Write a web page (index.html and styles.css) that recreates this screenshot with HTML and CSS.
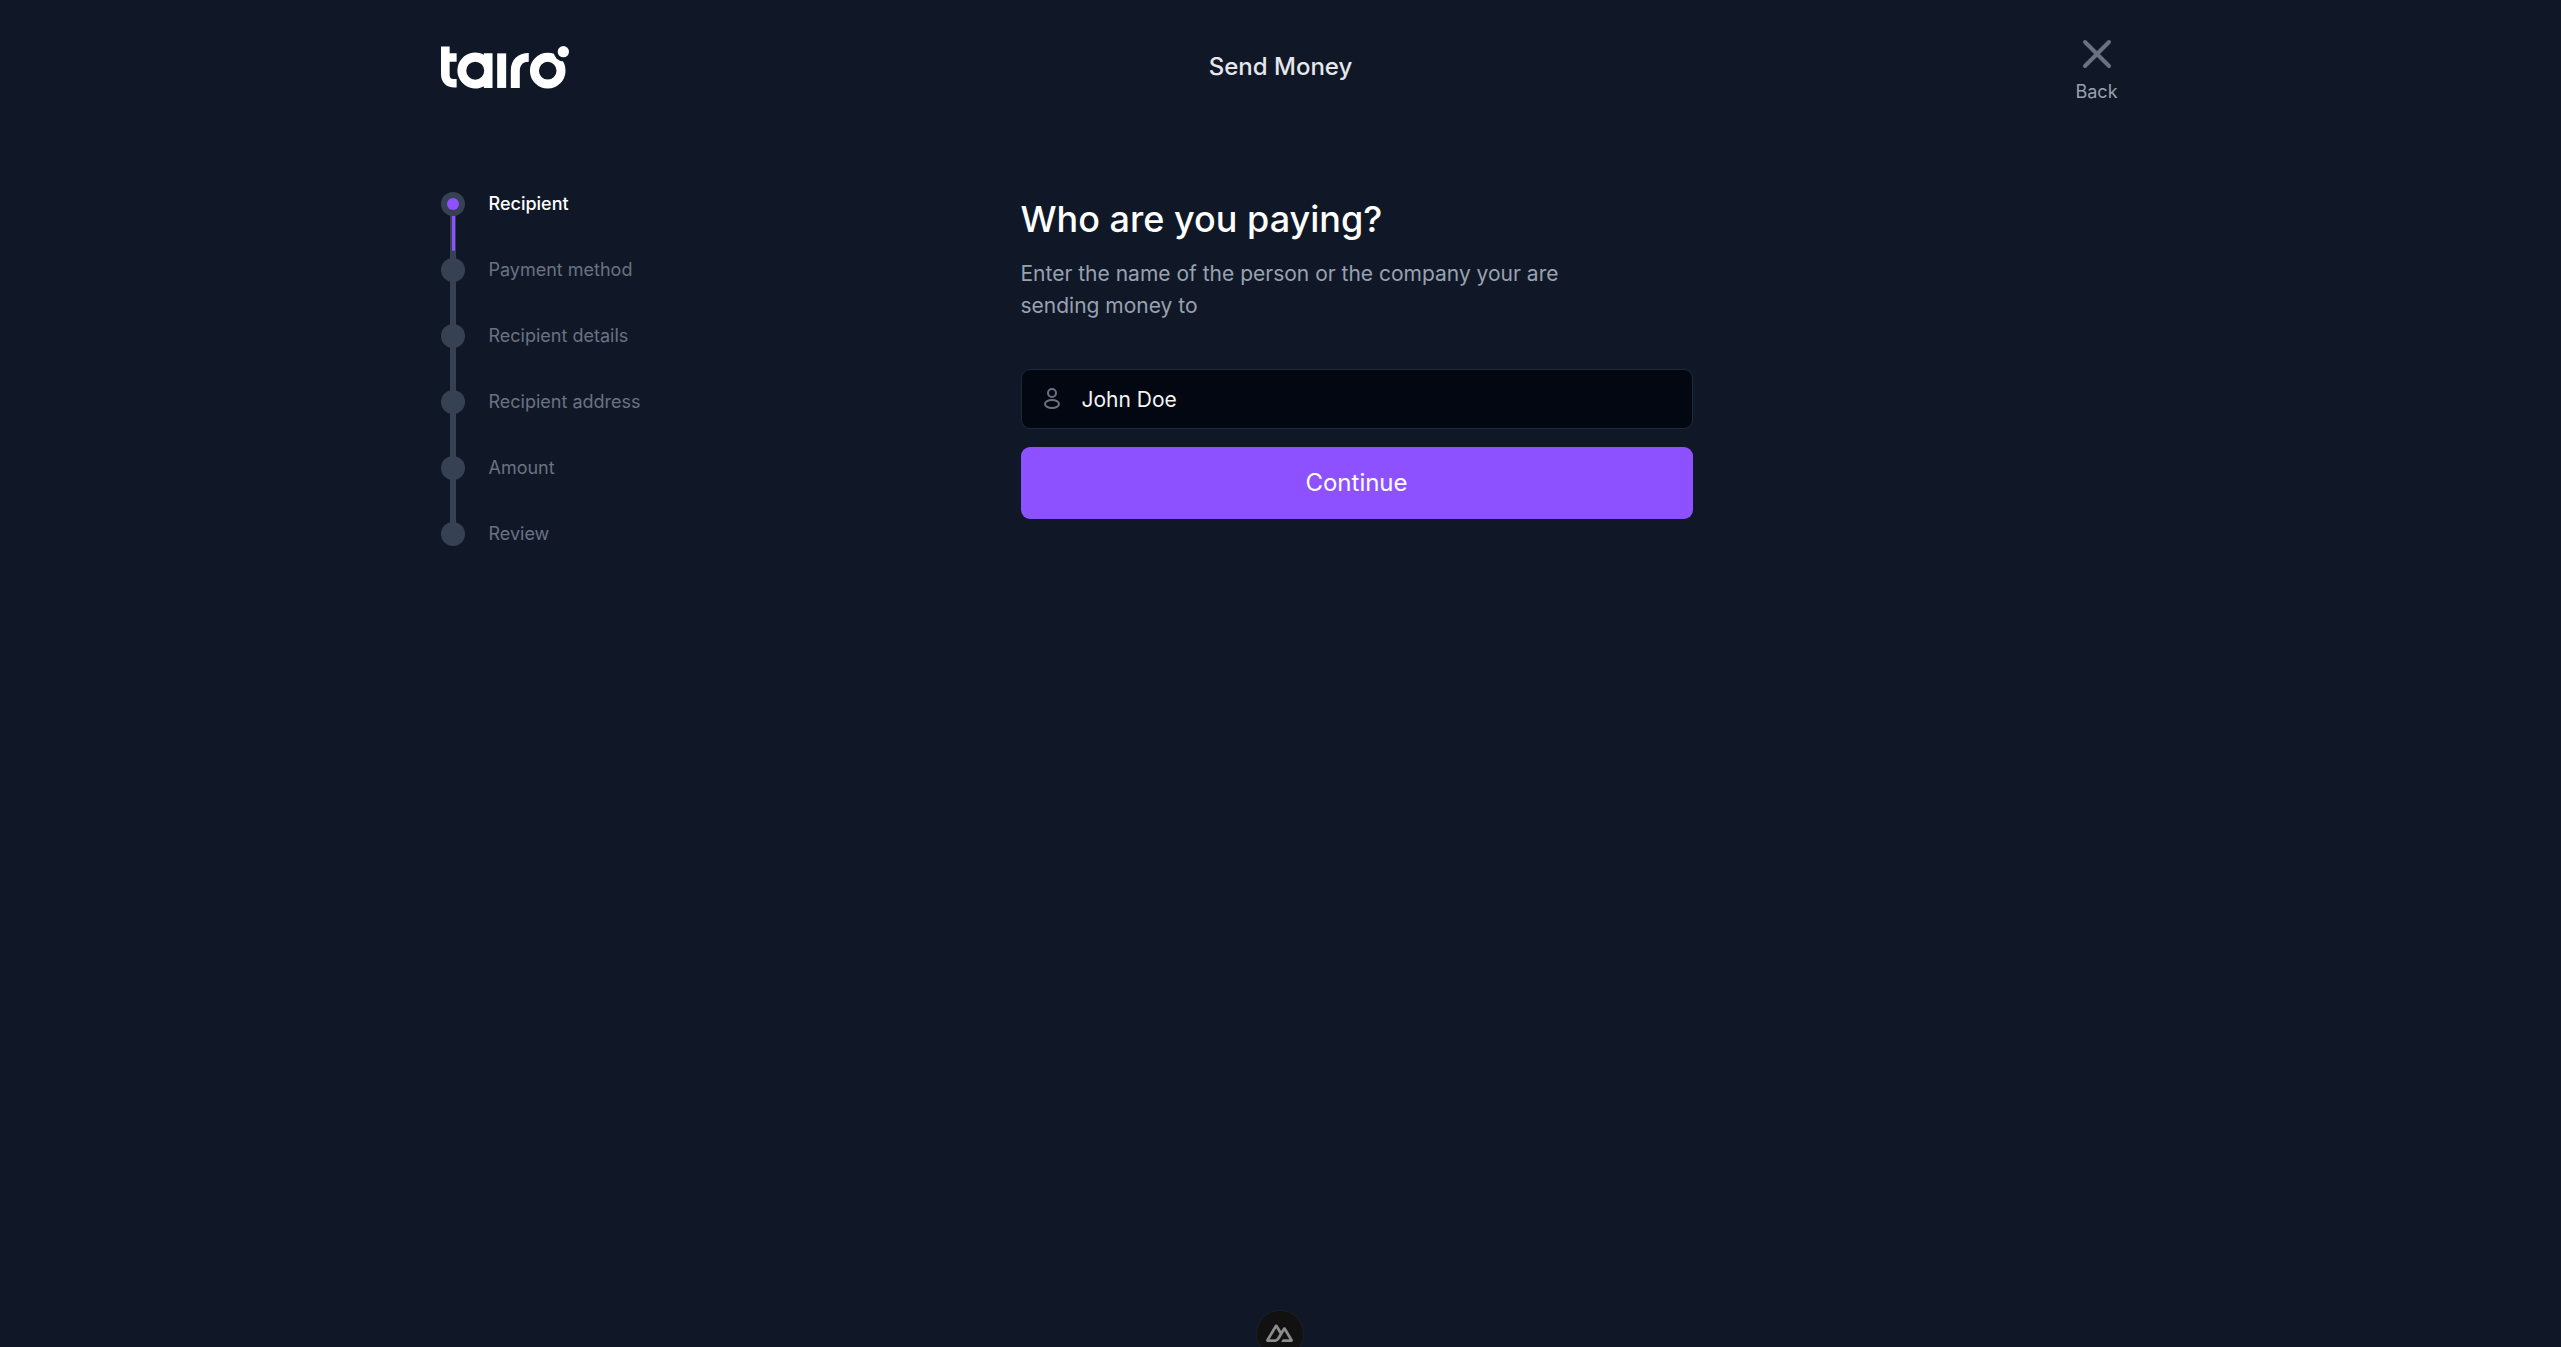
FILE: index.html
```html
<!DOCTYPE html>
<html lang="en">
<head>
<meta charset="utf-8">
<meta name="viewport" content="width=device-width, initial-scale=1">
<title>Send Money</title>
<link rel="stylesheet" href="styles.css">
</head>
<body>
<div class="page">
  <header class="header">
    <a class="logo" href="#" aria-label="Tairo">
      <svg viewBox="33 50 385 129" aria-hidden="true">
        <defs>
          <mask id="notch" maskUnits="userSpaceOnUse" x="290" y="60" width="130" height="120">
            <rect x="290" y="60" width="130" height="120" fill="#fff"/>
            <circle cx="401" cy="67" r="29" fill="#000"/>
          </mask>
        </defs>
        <g fill="currentColor">
          <path d="M33 51H59V72H80V97H59V138Q59 149 70 149H80V175H74C48 175 33 158 33 134Z"/>
          <path d="M162 72H188V176H162V171A54 54 0 1 1 162 76ZM136 97A27 27 0 1 0 136 151A27 27 0 1 0 136 97Z"/>
          <path d="M202 72H229V176H202Z"/>
          <path d="M243 176V124C243 91 264 71 297 71V97C280 97 270 107 270 124V176Z"/>
          <circle cx="401" cy="67" r="17"/>
        </g>
        <circle cx="354" cy="124" r="40" fill="none" stroke="currentColor" stroke-width="27" mask="url(#notch)"/>
      </svg>
    </a>
    <h1 class="header-title">Send Money</h1>
    <a class="back" href="#">
      <svg class="back-icon" viewBox="0 0 48 48" aria-hidden="true"><path d="M12 12L36 36M36 12L12 36"/></svg>
      <span>Back</span>
    </a>
  </header>

  <main class="content">
    <nav class="steps-nav" aria-label="Progress">
      <ol class="steps">
        <li class="step is-current" aria-current="step"><span class="dot"></span>Recipient</li>
        <li class="step"><span class="dot"></span>Payment method</li>
        <li class="step"><span class="dot"></span>Recipient details</li>
        <li class="step"><span class="dot"></span>Recipient address</li>
        <li class="step"><span class="dot"></span>Amount</li>
        <li class="step"><span class="dot"></span>Review</li>
      </ol>
    </nav>
    <form class="form">
      <h2 class="form-title"><label for="recipient">Who are you paying?</label></h2>
      <p class="form-text">Enter the name of the person or the company your are sending money to</p>
      <div class="field">
        <svg class="field-icon" viewBox="0 0 24 24" aria-hidden="true"><circle cx="12" cy="6" r="4"/><ellipse cx="12" cy="17" rx="7" ry="4"/></svg>
        <input class="input" id="recipient" type="text" value="John Doe">
      </div>
      <button class="button" type="button">Continue</button>
    </form>
  </main>
</div>
<button class="devtools" type="button" aria-label="Toggle devtools">
  <svg viewBox="0 0 324 204" aria-hidden="true"><path d="M181.767 204H301.864C305.679 204 309.427 203.032 312.73 201.195C316.034 199.357 318.777 196.713 320.684 193.53C322.591 190.347 323.594 186.736 323.593 183.061C323.591 179.386 322.584 175.776 320.675 172.594L240.02 38.053C238.113 34.871 235.371 32.228 232.068 30.39C228.765 28.553 225.019 27.586 221.205 27.586C217.392 27.586 213.645 28.553 210.343 30.39C207.04 32.228 204.298 34.871 202.391 38.053L181.767 72.478L141.445 5.161C139.536 1.979 136.793 -.663 133.489 -2.5C130.186 -4.337 126.438 -5.304 122.625 -5.304C118.811 -5.304 115.064 -4.337 111.76 -2.5C108.457 -.663 105.713 1.979 103.805 5.161L3.442 172.594C1.532 175.776 .526 179.386 .524 183.061C.523 186.736 1.525 190.347 3.432 193.53C5.339 196.713 8.083 199.357 11.387 201.195C14.69 203.032 18.438 204 22.252 204H97.638C127.507 204 149.533 191.309 164.691 166.549L201.485 104.758L221.194 71.689L280.343 171.029H201.485L181.767 204ZM96.417 170.995L43.808 170.984L122.669 38.536L162.018 104.758L135.672 149.02C125.605 165.12 114.17 170.995 96.417 170.995Z"/></svg>
</button>
</body>
</html>
```

FILE: styles.css
```css
* {
  box-sizing: border-box;
  margin: 0;
  padding: 0;
}

body {
  background: #101828;
  color: #fff;
  font-family: Inter, "Liberation Sans", sans-serif;
  font-size: 18px;
  line-height: 24px;
}

a {
  color: inherit;
  text-decoration: none;
}

.page {
  min-height: 100vh;
  max-width: 1728px;
  margin: 0 auto;
  padding: 0 24px;
}

.header {
  display: grid;
  grid-template-columns: 1fr auto 1fr;
  align-items: center;
  padding: 30px 0 28px;
}

.logo {
  justify-self: start;
}

.logo svg {
  display: block;
  width: 128px;
  height: 43px;
}

.header-title {
  font-size: 24px;
  font-weight: 500;
  line-height: 36px;
  color: #e5e7eb;
}

.back {
  justify-self: end;
  display: flex;
  flex-direction: column;
  align-items: center;
  gap: 2px;
  min-width: 48px;
  color: #99a1af;
}

.back-icon {
  width: 48px;
  height: 48px;
  fill: none;
  stroke: #6a7282;
  stroke-width: 4;
  stroke-linecap: round;
}

.content {
  display: grid;
  grid-template-columns: repeat(12, 1fr);
  gap: 60px;
  padding-top: 60px;
}

.steps-nav {
  grid-column: span 4;
}

.steps {
  display: flex;
  flex-direction: column;
  gap: 42px;
  list-style: none;
}

.step {
  position: relative;
  display: flex;
  align-items: center;
  gap: 24px;
  color: #6a7282;
}

.step.is-current {
  color: #fff;
  font-weight: 500;
}

.dot {
  display: grid;
  place-items: center;
  width: 24px;
  height: 24px;
  border-radius: 50%;
  background: #364153;
}

.step:not(:last-child)::before {
  content: "";
  position: absolute;
  top: 23px;
  left: 9px;
  width: 6px;
  height: 44px;
  background: #364153;
}

.is-current .dot::before {
  content: "";
  width: 12px;
  height: 12px;
  border-radius: 50%;
  background: #8e51ff;
}

.is-current::after {
  content: "";
  position: absolute;
  top: 24px;
  left: 11px;
  width: 3px;
  height: 35px;
  border-radius: 0 0 2px 2px;
  background: #8e51ff;
}

.form {
  grid-column: span 8;
  width: 100%;
  max-width: 672px;
}

.form-title {
  padding-top: 3px;
  font-size: 36px;
  font-weight: 500;
  line-height: 48px;
}

.form-text {
  max-width: 576px;
  margin: 15px 0 47px;
  font-size: 21px;
  line-height: 32px;
  color: #99a1af;
}

.field {
  position: relative;
}

.field-icon {
  position: absolute;
  top: 18px;
  left: 19px;
  width: 24px;
  height: 24px;
  fill: none;
  stroke: #6a7282;
  stroke-width: 2;
}

.input {
  display: block;
  width: 100%;
  height: 60px;
  padding: 0 24px 0 60px;
  border: 1px solid #1e2939;
  border-radius: 9px;
  outline: 0;
  background: #030712;
  color: #f3f4f6;
  font: inherit;
  font-size: 21px;
}

.button {
  width: 100%;
  height: 72px;
  margin-top: 18px;
  border: 0;
  border-radius: 9px;
  background: #8e51ff;
  color: #fff;
  font: inherit;
  font-size: 24px;
}

.devtools {
  position: fixed;
  bottom: -11px;
  left: 50%;
  display: flex;
  justify-content: center;
  width: 48px;
  height: 48px;
  margin-left: -25px;
  padding-top: 14px;
  border: 1px solid #1f1f1f;
  border-radius: 50%;
  background: #111;
}

.devtools svg {
  width: 27px;
  height: 17px;
  overflow: visible;
  fill: #8c8c8c;
}
```
